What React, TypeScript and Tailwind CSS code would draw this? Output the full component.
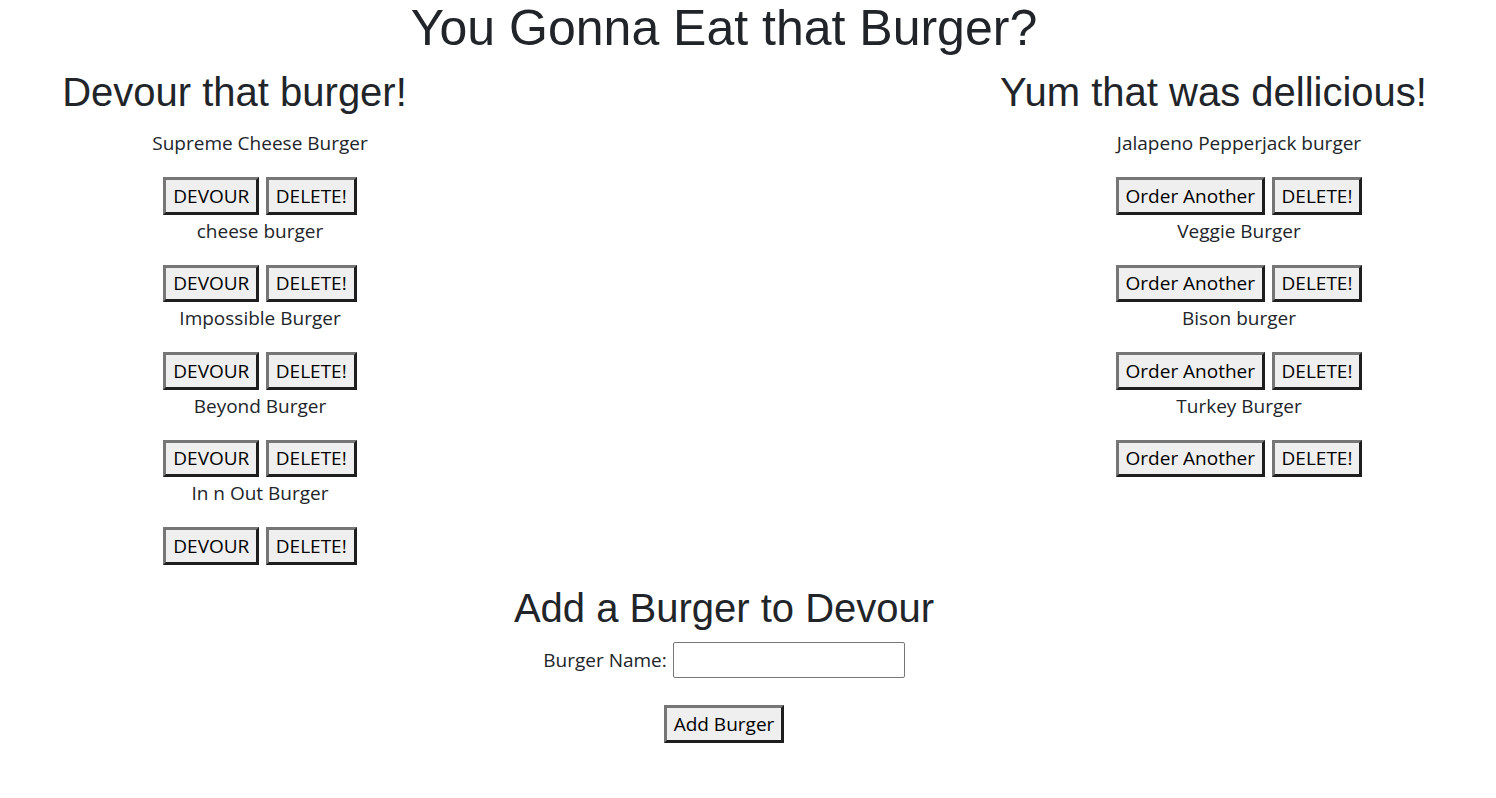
import React from "react";

const devourList = [
  "Supreme Cheese Burger",
  "cheese burger",
  "Impossible Burger",
  "Beyond Burger",
  "In n Out Burger",
];

const eatenList = [
  "Jalapeno Pepperjack burger",
  "Veggie Burger",
  "Bison burger",
  "Turkey Burger",
];

const btn =
  "h-[37.5px] px-[7px] bg-[#efefef] text-black leading-[30px] border-[3px] border-t-[#767676] border-l-[#767676] border-b-[#1e1e1e] border-r-[#1e1e1e]";

const BurgerItem = ({ name, action }: { name: string; action: string }) => (
  <li className="mb-[1px]">
    <div className="h-[30px] leading-[30px]">{name}</div>
    <div className="mt-[19px] flex justify-center gap-[6.5px]">
      <button className={btn}>{action}</button>
      <button className={btn}>DELETE!</button>
    </div>
  </li>
);

const Column = ({
  title,
  items,
  action,
}: {
  title: string;
  items: string[];
  action: string;
}) => (
  <div className="w-[469px] text-center">
    <h2 className="text-[40px] leading-[48px] mb-[12px] font-['Liberation_Sans',Arial,sans-serif]">
      {title}
    </h2>
    <ul className="pl-[51px]">
      {items.map((b) => (
        <BurgerItem key={b} name={b} action={action} />
      ))}
    </ul>
  </div>
);

export default function App() {
  return (
    <div className="min-h-[798px] bg-white text-[#212529] text-[19px] leading-[30px] font-['Open_Sans',sans-serif]">
      <div className="w-[1448px]">
        <h1 className="-mt-[2px] mb-[10px] text-center text-[50px] leading-[60px] font-['Liberation_Sans',Arial,sans-serif]">
          You Gonna Eat that Burger?
        </h1>
        <div className="flex justify-between">
          <Column title="Devour that burger!" items={devourList} action="DEVOUR" />
          <Column title="Yum that was dellicious!" items={eatenList} action="Order Another" />
        </div>
        <div className="mt-[18px] flex flex-col items-center">
          <h2 className="text-[40px] leading-[48px] font-['Liberation_Sans',Arial,sans-serif]">
            Add a Burger to Devour
          </h2>
          <div className="mt-[10px] flex items-center gap-[6px]">
            <label>Burger Name:</label>
            <input
              type="text"
              className="w-[232px] h-[36px] border border-[#767676] rounded-[2px] px-1 outline-none"
            />
          </div>
          <button className={`${btn} mt-[27.5px]`}>Add Burger</button>
        </div>
      </div>
    </div>
  );
}
